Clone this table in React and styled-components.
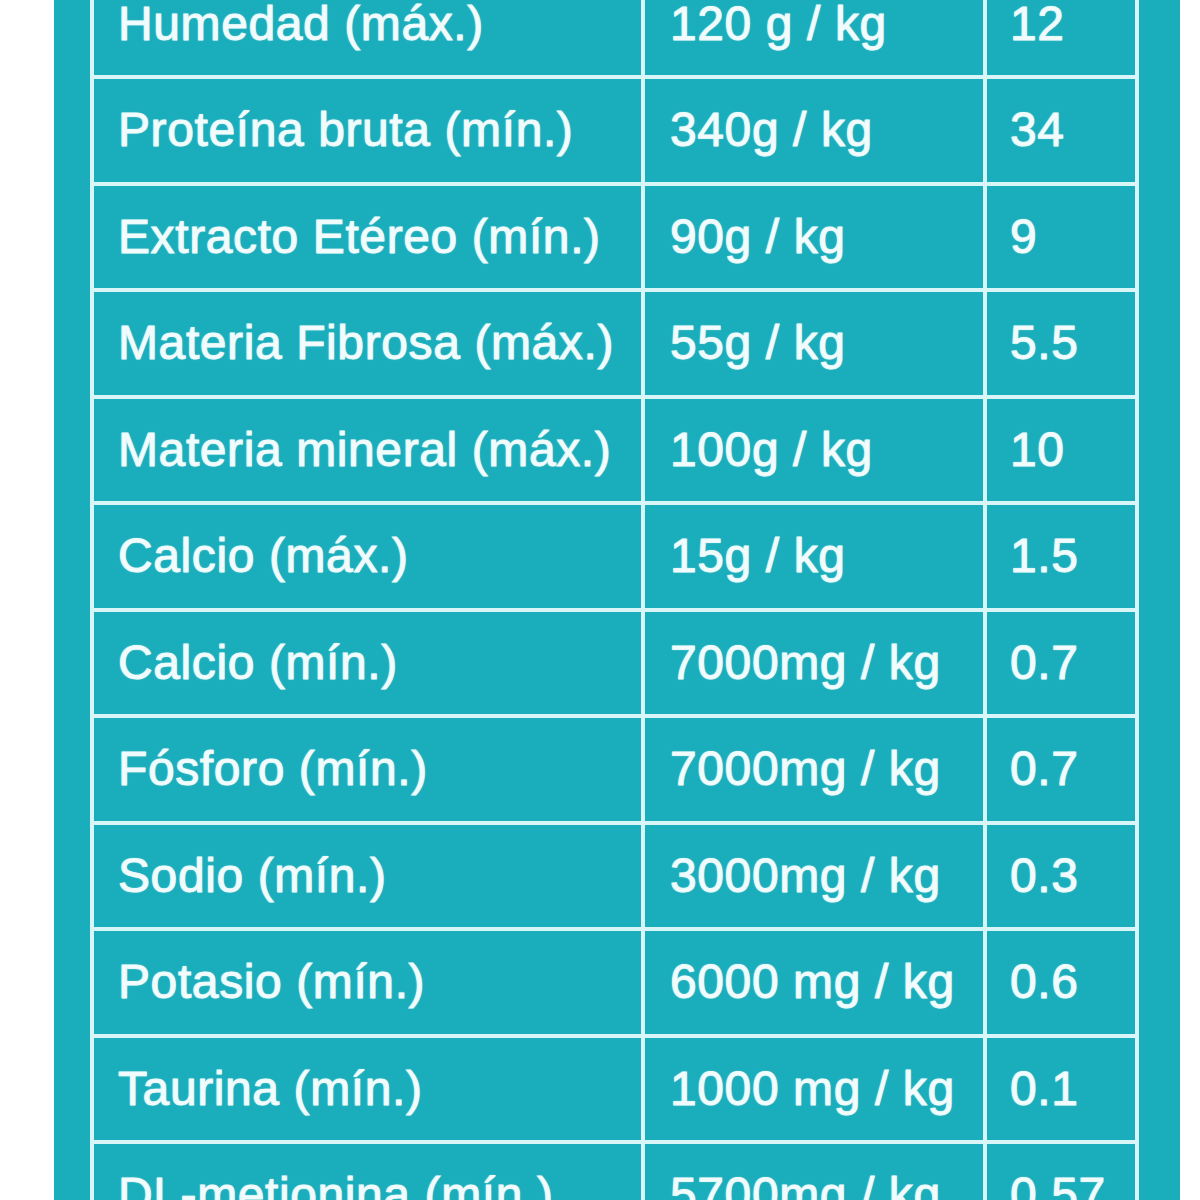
import React from 'react'
import styled, { createGlobalStyle } from 'styled-components'

const GlobalStyle = createGlobalStyle`
  html, body {
    margin: 0;
    padding: 0;
    background: #ffffff;
  }
`

const Page = styled.div`
  height: 1200px;
  overflow: hidden;
  background: #ffffff;
`

const Panel = styled.section`
  margin: -31.5px 0 0 54px;
  width: 1126px;
  min-height: 1300px;
  box-sizing: border-box;
  padding: 0 41px 0 36px;
  background: #1aadbb;
`

const Table = styled.table`
  width: 1049px;
  table-layout: fixed;
  border-collapse: separate;
  border-spacing: 0;
  border-top: 4px solid #d8f6f8;
  border-left: 4px solid #d8f6f8;
  font-family: "Liberation Sans", Arial, sans-serif;
  color: #f2fcfd;
`

const Cell = styled.td`
  box-sizing: border-box;
  height: 106.5px;
  padding: 0 0 0 ${(p) => p.$pad}px;
  border-right: 4px solid #d8f6f8;
  border-bottom: 4px solid #d8f6f8;
  font-size: 48px;
  line-height: 1;
  letter-spacing: 0.6px;
  white-space: nowrap;
  vertical-align: middle;
  -webkit-text-stroke: 0.9px #eefbfc;
  text-shadow: 0 0 2px rgba(210, 248, 250, 0.75);
`

const rows = [
  ['Humedad (máx.)', '120 g / kg', '12'],
  ['Proteína bruta (mín.)', '340g / kg', '34'],
  ['Extracto Etéreo (mín.)', '90g / kg', '9'],
  ['Materia Fibrosa (máx.)', '55g / kg', '5.5'],
  ['Materia mineral (máx.)', '100g / kg', '10'],
  ['Calcio (máx.)', '15g / kg', '1.5'],
  ['Calcio (mín.)', '7000mg / kg', '0.7'],
  ['Fósforo (mín.)', '7000mg / kg', '0.7'],
  ['Sodio (mín.)', '3000mg / kg', '0.3'],
  ['Potasio (mín.)', '6000 mg / kg', '0.6'],
  ['Taurina (mín.)', '1000 mg / kg', '0.1'],
  ['DL-metionina (mín.)', '5700mg / kg', '0.57'],
]

export default function App() {
  return (
    <Page>
      <GlobalStyle />
      <Panel>
        <Table>
          <colgroup>
            <col style={{ width: 551 }} />
            <col style={{ width: 342 }} />
            <col style={{ width: 152 }} />
          </colgroup>
          <tbody>
            {rows.map(([name, amount, pct]) => (
              <tr key={name + amount}>
                <Cell $pad={24}>{name}</Cell>
                <Cell $pad={25}>{amount}</Cell>
                <Cell $pad={23}>{pct}</Cell>
              </tr>
            ))}
          </tbody>
        </Table>
      </Panel>
    </Page>
  )
}
